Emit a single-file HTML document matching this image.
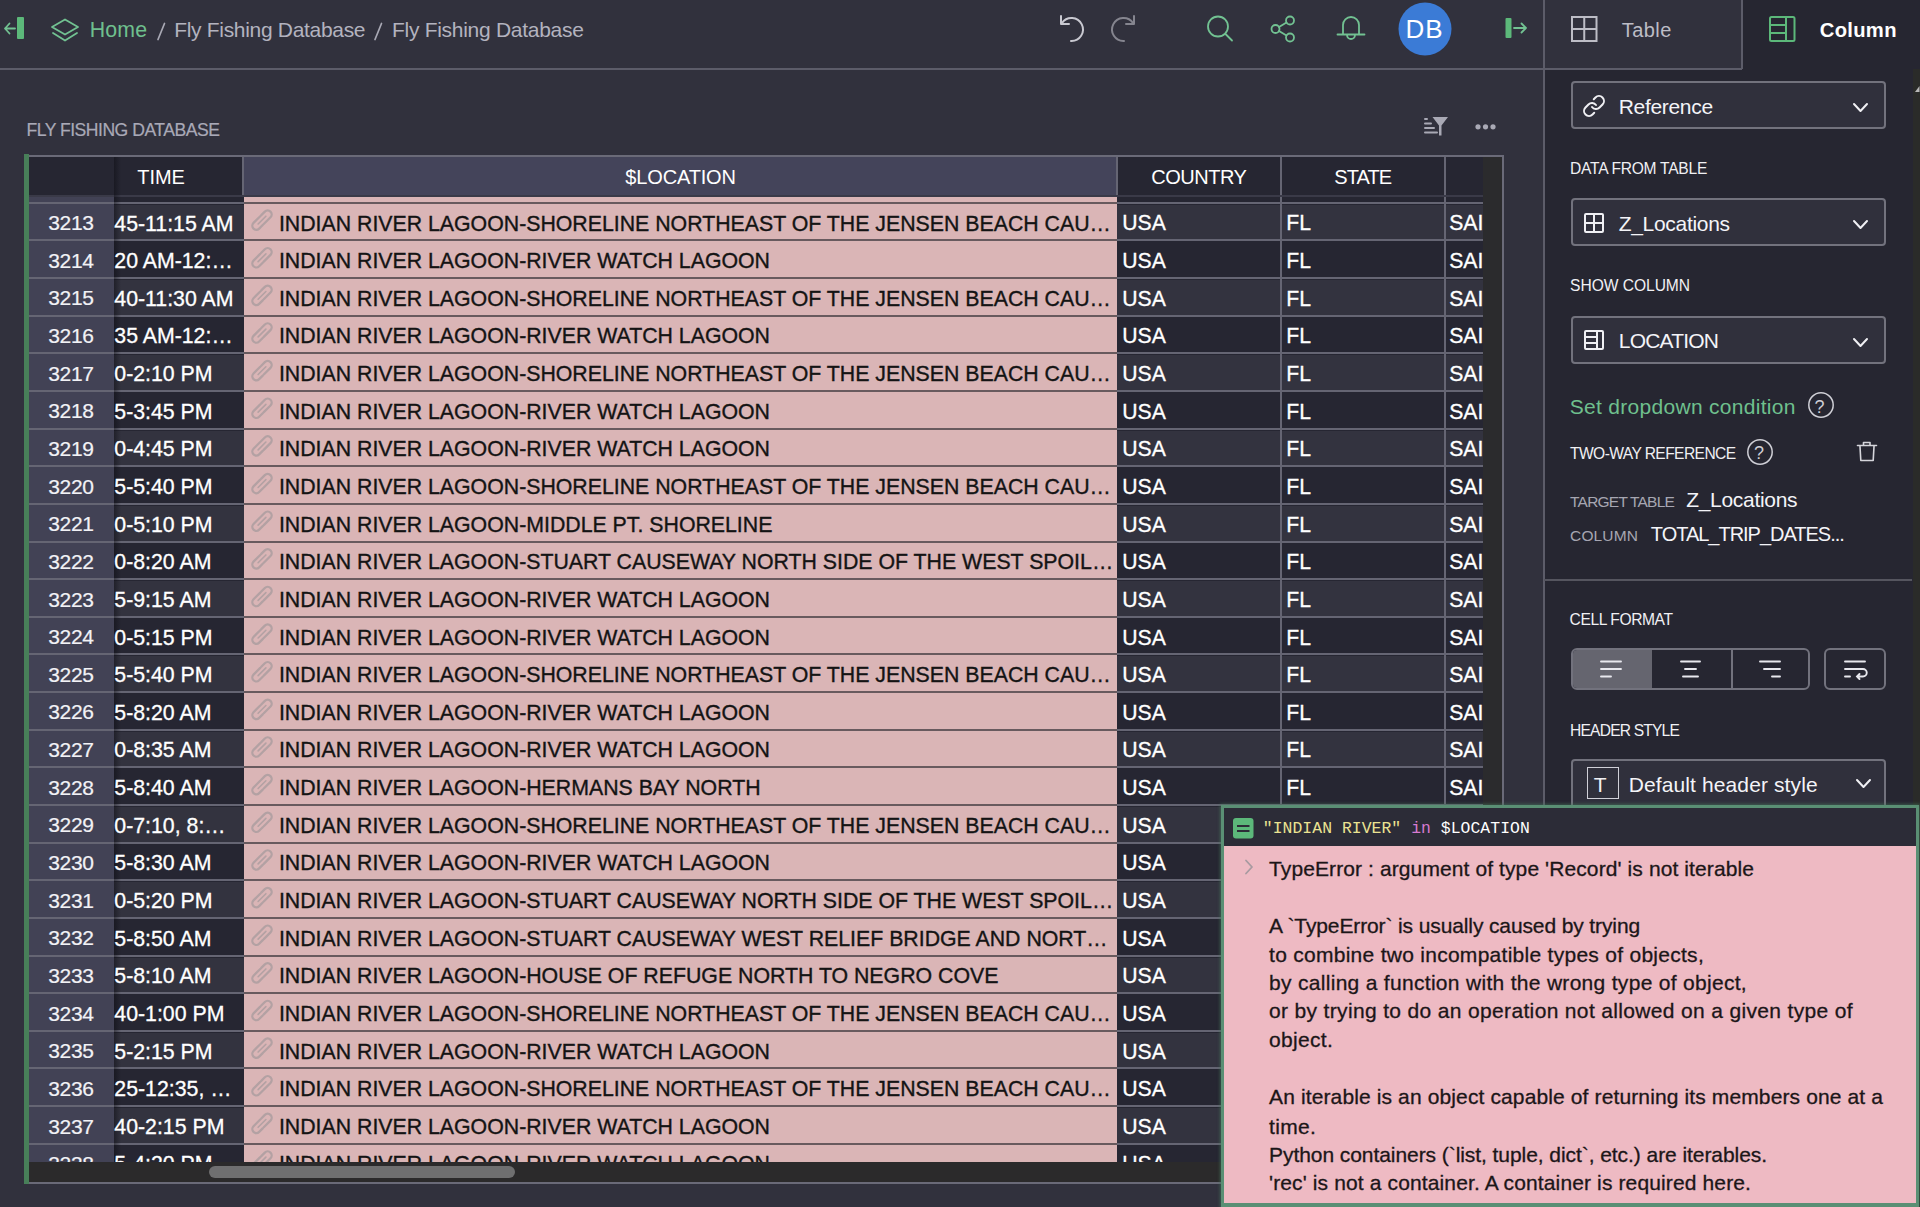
<!DOCTYPE html>
<html><head><meta charset="utf-8"><title>Fly Fishing Database</title>
<style>
html,body{margin:0;padding:0;}
body{width:1920px;height:1207px;overflow:hidden;position:relative;background:#31313d;font-family:'Liberation Sans', sans-serif;}
.t{position:absolute;white-space:pre;}
</style></head><body>
<div style="position:absolute;left:0px;top:0px;width:1920px;height:1207px;background:#31313d;"></div>
<div style="position:absolute;left:0px;top:68px;width:1544px;height:2px;background:#5c5c69;"></div>
<div style="position:absolute;left:1544px;top:68px;width:376px;height:1139px;background:#262631;"></div>
<div style="position:absolute;left:1742.5px;top:0px;width:177.5px;height:68px;background:#262631;"></div>
<div style="position:absolute;left:1543px;top:0px;width:1.5px;height:1207px;background:#5c5c69;"></div>
<div style="position:absolute;left:1741px;top:0px;width:1.5px;height:69px;background:#5c5c69;"></div>
<div style="position:absolute;left:1544px;top:68px;width:198px;height:1.5px;background:#5c5c69;"></div>
<svg style="position:absolute;left:0;top:0" width="1544" height="68" viewBox="0 0 1544 68">
<g fill="none" stroke="#72c292" stroke-width="1.8" stroke-linecap="round" stroke-linejoin="round">
 <path d="M5 28.5 H15 M9.5 23.5 L5 28.5 L9.5 33.5"/>
 <path d="M65 19.5 L78 27 L65 34.5 L52 27 Z"/>
 <path d="M53 33 L65 40.5 L77 33"/>
 <circle cx="1218" cy="26.5" r="10"/>
 <path d="M1225.5 34 L1232 40.5"/>
 <circle cx="1275.5" cy="29" r="4"/><circle cx="1290" cy="20.5" r="4"/><circle cx="1290" cy="37.5" r="4"/>
 <path d="M1279 27 L1286.5 22.5 M1279 31 L1286.5 35.5"/>
 <path d="M1343 34 V25 a8 8 0 0 1 16 0 V34 M1337.5 34.5 H1364.5 M1347 35 a4 4 0 0 0 8 0"/>
 <path d="M1514 28 H1526 M1521.5 23.5 L1526 28 L1521.5 32.5"/>
</g>
<rect x="17" y="17" width="7" height="22" rx="1" fill="#5cb87a"/>
<rect x="1505.5" y="18" width="6" height="20" rx="1" fill="#5cb87a"/>
<g fill="none" stroke="#c9c9d1" stroke-width="2" stroke-linecap="round" stroke-linejoin="round">
 <path d="M1062 23 A 11.5 11.5 0 1 1 1071 41"/>
 <path d="M1061 16 V24 H1069"/>
</g>
<g fill="none" stroke="#85858f" stroke-width="2" stroke-linecap="round" stroke-linejoin="round">
 <path d="M1133 23 A 11.5 11.5 0 1 0 1124 41"/>
 <path d="M1134 16 V24 H1126"/>
</g>
<circle cx="1425" cy="29" r="26.5" fill="#3b7bd6"/>
</svg>
<div class="t" style="left:89.72px;top:20.00px;font-family:'Liberation Sans', sans-serif;font-size:21.3px;line-height:21.3px;color:#6fc08e;letter-spacing:0.172px;">Home</div>
<svg style="position:absolute;left:150px;top:18px" width="250" height="26"><g stroke="#a9a9b5" stroke-width="1.7" stroke-linecap="round"><path d="M14.5 5.5 L8 21.5"/><path d="M231.5 5.5 L225 21.5"/></g></svg>
<div class="t" style="left:174.24px;top:19.00px;font-family:'Liberation Sans', sans-serif;font-size:21px;line-height:21px;color:#b3b3bf;letter-spacing:-0.313px;">Fly Fishing Database</div>
<div class="t" style="left:392.04px;top:19.00px;font-family:'Liberation Sans', sans-serif;font-size:21px;line-height:21px;color:#b3b3bf;letter-spacing:-0.288px;">Fly Fishing Database</div>
<div class="t" style="left:1405.44px;top:16.00px;font-family:'Liberation Sans', sans-serif;font-size:26px;line-height:26px;color:#ffffff;letter-spacing:0.938px;">DB</div>
<svg style="position:absolute;left:1544px;top:0" width="376" height="68" viewBox="1544 0 376 68">
<g fill="none" stroke="#bdbdc6" stroke-width="2">
 <rect x="1572" y="17" width="24.5" height="24"/>
 <path d="M1584.25 17 V41 M1572 29 H1596.5"/>
</g>
<g fill="none" stroke="#5cb87a" stroke-width="2">
 <rect x="1770" y="17" width="24.5" height="24" rx="1.5"/>
 <path d="M1786 17 V41 M1770 25 H1786 M1770 33 H1786"/>
</g>
</svg>
<div class="t" style="left:1621.80px;top:20.00px;font-family:'Liberation Sans', sans-serif;font-size:20px;line-height:20px;color:#bdbdc6;letter-spacing:0.438px;">Table</div>
<div class="t" style="left:1819.79px;top:20.00px;font-family:'Liberation Sans', sans-serif;font-size:20.2px;line-height:20.2px;color:#ffffff;font-weight:700;letter-spacing:0.310px;">Column</div>
<div class="t" style="left:26.44px;top:122.00px;font-family:'Liberation Sans', sans-serif;font-size:17.6px;line-height:17.6px;color:#a9a9b7;letter-spacing:-0.502px;-webkit-text-stroke:0.2px #a9a9b7;">FLY FISHING DATABASE</div>
<svg style="position:absolute;left:1420px;top:110px" width="80" height="32" viewBox="1420 110 80 32">
<g stroke="#a9a9b5" stroke-width="2" stroke-linecap="round">
 <path d="M1425 119 H1427 M1425 123.5 H1431 M1425 128 H1434 M1425 132.5 H1437"/>
</g>
<path d="M1432.5 117 H1448 L1441.5 125.5 V135.5 L1439 135.5 V125.5 Z" fill="#a9a9b5"/>
<g fill="#a9a9b5"><circle cx="1478" cy="126.8" r="2.6"/><circle cx="1485.5" cy="126.8" r="2.6"/><circle cx="1493" cy="126.8" r="2.6"/></g>
</svg>
<div style="position:absolute;left:24px;top:155px;width:1479px;height:1029px;background:#262632;"></div>
<div style="position:absolute;left:28px;top:196px;width:1454.5px;height:966px;overflow:hidden">
<div style="position:absolute;left:85.5px;top:0.00px;width:1369.0px;height:6.80px;background:#262632"></div>
<div style="position:absolute;left:85.5px;top:8.80px;width:1369.0px;height:35.64px;background:#33333f"></div>
<div style="position:absolute;left:85.5px;top:46.44px;width:1369.0px;height:35.64px;background:#262632"></div>
<div style="position:absolute;left:85.5px;top:84.08px;width:1369.0px;height:35.64px;background:#33333f"></div>
<div style="position:absolute;left:85.5px;top:121.71px;width:1369.0px;height:35.64px;background:#262632"></div>
<div style="position:absolute;left:85.5px;top:159.35px;width:1369.0px;height:35.64px;background:#33333f"></div>
<div style="position:absolute;left:85.5px;top:196.99px;width:1369.0px;height:35.64px;background:#262632"></div>
<div style="position:absolute;left:85.5px;top:234.63px;width:1369.0px;height:35.64px;background:#33333f"></div>
<div style="position:absolute;left:85.5px;top:272.27px;width:1369.0px;height:35.64px;background:#262632"></div>
<div style="position:absolute;left:85.5px;top:309.90px;width:1369.0px;height:35.64px;background:#33333f"></div>
<div style="position:absolute;left:85.5px;top:347.54px;width:1369.0px;height:35.64px;background:#262632"></div>
<div style="position:absolute;left:85.5px;top:385.18px;width:1369.0px;height:35.64px;background:#33333f"></div>
<div style="position:absolute;left:85.5px;top:422.82px;width:1369.0px;height:35.64px;background:#262632"></div>
<div style="position:absolute;left:85.5px;top:460.46px;width:1369.0px;height:35.64px;background:#33333f"></div>
<div style="position:absolute;left:85.5px;top:498.09px;width:1369.0px;height:35.64px;background:#262632"></div>
<div style="position:absolute;left:85.5px;top:535.73px;width:1369.0px;height:35.64px;background:#33333f"></div>
<div style="position:absolute;left:85.5px;top:573.37px;width:1369.0px;height:35.64px;background:#262632"></div>
<div style="position:absolute;left:85.5px;top:611.01px;width:1369.0px;height:35.64px;background:#33333f"></div>
<div style="position:absolute;left:85.5px;top:648.65px;width:1369.0px;height:35.64px;background:#262632"></div>
<div style="position:absolute;left:85.5px;top:686.28px;width:1369.0px;height:35.64px;background:#33333f"></div>
<div style="position:absolute;left:85.5px;top:723.92px;width:1369.0px;height:35.64px;background:#262632"></div>
<div style="position:absolute;left:85.5px;top:761.56px;width:1369.0px;height:35.64px;background:#33333f"></div>
<div style="position:absolute;left:85.5px;top:799.20px;width:1369.0px;height:35.64px;background:#262632"></div>
<div style="position:absolute;left:85.5px;top:836.84px;width:1369.0px;height:35.64px;background:#33333f"></div>
<div style="position:absolute;left:85.5px;top:874.47px;width:1369.0px;height:35.64px;background:#262632"></div>
<div style="position:absolute;left:85.5px;top:912.11px;width:1369.0px;height:35.64px;background:#33333f"></div>
<div style="position:absolute;left:85.5px;top:949.75px;width:1369.0px;height:35.64px;background:#262632"></div>
<div style="position:absolute;left:215.5px;top:0;width:873.0px;height:966px;background:#dab5b6"></div>
<div style="position:absolute;left:0;top:0;width:85.5px;height:966px;background:#424255"></div>
<div style="position:absolute;left:0;top:5.80px;width:1454.5px;height:2px;background:#656573"></div>
<div style="position:absolute;left:215.5px;top:5.80px;width:873.0px;height:2px;background:#685a5e"></div>
<div style="position:absolute;left:0;top:43.44px;width:1454.5px;height:2px;background:#656573"></div>
<div style="position:absolute;left:215.5px;top:43.44px;width:873.0px;height:2px;background:#685a5e"></div>
<div style="position:absolute;left:0;top:81.08px;width:1454.5px;height:2px;background:#656573"></div>
<div style="position:absolute;left:215.5px;top:81.08px;width:873.0px;height:2px;background:#685a5e"></div>
<div style="position:absolute;left:0;top:118.71px;width:1454.5px;height:2px;background:#656573"></div>
<div style="position:absolute;left:215.5px;top:118.71px;width:873.0px;height:2px;background:#685a5e"></div>
<div style="position:absolute;left:0;top:156.35px;width:1454.5px;height:2px;background:#656573"></div>
<div style="position:absolute;left:215.5px;top:156.35px;width:873.0px;height:2px;background:#685a5e"></div>
<div style="position:absolute;left:0;top:193.99px;width:1454.5px;height:2px;background:#656573"></div>
<div style="position:absolute;left:215.5px;top:193.99px;width:873.0px;height:2px;background:#685a5e"></div>
<div style="position:absolute;left:0;top:231.63px;width:1454.5px;height:2px;background:#656573"></div>
<div style="position:absolute;left:215.5px;top:231.63px;width:873.0px;height:2px;background:#685a5e"></div>
<div style="position:absolute;left:0;top:269.27px;width:1454.5px;height:2px;background:#656573"></div>
<div style="position:absolute;left:215.5px;top:269.27px;width:873.0px;height:2px;background:#685a5e"></div>
<div style="position:absolute;left:0;top:306.90px;width:1454.5px;height:2px;background:#656573"></div>
<div style="position:absolute;left:215.5px;top:306.90px;width:873.0px;height:2px;background:#685a5e"></div>
<div style="position:absolute;left:0;top:344.54px;width:1454.5px;height:2px;background:#656573"></div>
<div style="position:absolute;left:215.5px;top:344.54px;width:873.0px;height:2px;background:#685a5e"></div>
<div style="position:absolute;left:0;top:382.18px;width:1454.5px;height:2px;background:#656573"></div>
<div style="position:absolute;left:215.5px;top:382.18px;width:873.0px;height:2px;background:#685a5e"></div>
<div style="position:absolute;left:0;top:419.82px;width:1454.5px;height:2px;background:#656573"></div>
<div style="position:absolute;left:215.5px;top:419.82px;width:873.0px;height:2px;background:#685a5e"></div>
<div style="position:absolute;left:0;top:457.46px;width:1454.5px;height:2px;background:#656573"></div>
<div style="position:absolute;left:215.5px;top:457.46px;width:873.0px;height:2px;background:#685a5e"></div>
<div style="position:absolute;left:0;top:495.09px;width:1454.5px;height:2px;background:#656573"></div>
<div style="position:absolute;left:215.5px;top:495.09px;width:873.0px;height:2px;background:#685a5e"></div>
<div style="position:absolute;left:0;top:532.73px;width:1454.5px;height:2px;background:#656573"></div>
<div style="position:absolute;left:215.5px;top:532.73px;width:873.0px;height:2px;background:#685a5e"></div>
<div style="position:absolute;left:0;top:570.37px;width:1454.5px;height:2px;background:#656573"></div>
<div style="position:absolute;left:215.5px;top:570.37px;width:873.0px;height:2px;background:#685a5e"></div>
<div style="position:absolute;left:0;top:608.01px;width:1454.5px;height:2px;background:#656573"></div>
<div style="position:absolute;left:215.5px;top:608.01px;width:873.0px;height:2px;background:#685a5e"></div>
<div style="position:absolute;left:0;top:645.65px;width:1454.5px;height:2px;background:#656573"></div>
<div style="position:absolute;left:215.5px;top:645.65px;width:873.0px;height:2px;background:#685a5e"></div>
<div style="position:absolute;left:0;top:683.28px;width:1454.5px;height:2px;background:#656573"></div>
<div style="position:absolute;left:215.5px;top:683.28px;width:873.0px;height:2px;background:#685a5e"></div>
<div style="position:absolute;left:0;top:720.92px;width:1454.5px;height:2px;background:#656573"></div>
<div style="position:absolute;left:215.5px;top:720.92px;width:873.0px;height:2px;background:#685a5e"></div>
<div style="position:absolute;left:0;top:758.56px;width:1454.5px;height:2px;background:#656573"></div>
<div style="position:absolute;left:215.5px;top:758.56px;width:873.0px;height:2px;background:#685a5e"></div>
<div style="position:absolute;left:0;top:796.20px;width:1454.5px;height:2px;background:#656573"></div>
<div style="position:absolute;left:215.5px;top:796.20px;width:873.0px;height:2px;background:#685a5e"></div>
<div style="position:absolute;left:0;top:833.84px;width:1454.5px;height:2px;background:#656573"></div>
<div style="position:absolute;left:215.5px;top:833.84px;width:873.0px;height:2px;background:#685a5e"></div>
<div style="position:absolute;left:0;top:871.47px;width:1454.5px;height:2px;background:#656573"></div>
<div style="position:absolute;left:215.5px;top:871.47px;width:873.0px;height:2px;background:#685a5e"></div>
<div style="position:absolute;left:0;top:909.11px;width:1454.5px;height:2px;background:#656573"></div>
<div style="position:absolute;left:215.5px;top:909.11px;width:873.0px;height:2px;background:#685a5e"></div>
<div style="position:absolute;left:0;top:946.75px;width:1454.5px;height:2px;background:#656573"></div>
<div style="position:absolute;left:215.5px;top:946.75px;width:873.0px;height:2px;background:#685a5e"></div>
<div style="position:absolute;left:1252.00px;top:0;width:2px;height:966px;background:#656573"></div>
<div style="position:absolute;left:1416.00px;top:0;width:2px;height:966px;background:#656573"></div>
</div>
<div style="position:absolute;left:28px;top:157px;width:1454.5px;height:39px;background:#262632;"></div>
<div style="position:absolute;left:243.5px;top:157px;width:873.0px;height:39px;background:#44445a;"></div>
<div style="position:absolute;left:1482.5px;top:157px;width:19.5px;height:1005px;background:#2b2b2d;"></div>
<div style="position:absolute;left:242.0px;top:157px;width:2.0px;height:39px;background:#656573;"></div>
<div style="position:absolute;left:1116.0px;top:157px;width:2.0px;height:39px;background:#656573;"></div>
<div style="position:absolute;left:1280.0px;top:157px;width:2.0px;height:39px;background:#656573;"></div>
<div style="position:absolute;left:1444.0px;top:157px;width:2.0px;height:39px;background:#656573;"></div>
<div style="position:absolute;left:28px;top:195px;width:1454.5px;height:2px;background:#3a3a48;"></div>
<div style="position:absolute;left:24px;top:155px;width:1479px;height:2px;background:#6a6a78;"></div>
<div style="position:absolute;left:1502px;top:155px;width:2px;height:1029px;background:#6a6a78;"></div>
<div style="position:absolute;left:28px;top:1162px;width:1474px;height:20px;background:#2b2a2b;"></div>
<div style="position:absolute;left:24px;top:1182px;width:1479px;height:2px;background:#6a6a78;"></div>
<div style="position:absolute;left:209px;top:1165.5px;width:306px;height:12.5px;background:#6f6f70;border-radius:6px"></div>
<div style="position:absolute;left:113.5px;top:157px;width:7.0px;height:1005px;background:transparent;background:linear-gradient(to right, rgba(10,10,16,0.45), rgba(10,10,16,0))"></div>
<div style="position:absolute;left:24px;top:154px;width:5px;height:1029.5px;background:#487f59;"></div>
<div class="t" style="left:137.30px;top:167.00px;font-family:'Liberation Sans', sans-serif;font-size:20px;line-height:20px;color:#ffffff;letter-spacing:-0.070px;">TIME</div>
<div class="t" style="left:625.30px;top:167.00px;font-family:'Liberation Sans', sans-serif;font-size:20px;line-height:20px;color:#ffffff;letter-spacing:-0.153px;">$LOCATION</div>
<div class="t" style="left:1151.30px;top:167.00px;font-family:'Liberation Sans', sans-serif;font-size:20px;line-height:20px;color:#ffffff;letter-spacing:-0.504px;">COUNTRY</div>
<div class="t" style="left:1334.30px;top:167.00px;font-family:'Liberation Sans', sans-serif;font-size:20px;line-height:20px;color:#ffffff;letter-spacing:-0.897px;">STATE</div>
<div style="position:absolute;left:28px;top:196px;width:1454.5px;height:966px;overflow:hidden"><div class="t" style="left:20.24px;top:16.00px;font-family:'Liberation Sans', sans-serif;font-size:21px;line-height:21px;color:#f2f2f6;letter-spacing:-0.305px;-webkit-text-stroke:0.2px #f2f2f6;">3213</div></div>
<div style="position:absolute;left:113.5px;top:196px;width:129.0px;height:966px;overflow:hidden"><div class="t" style="left:0.82px;top:18.00px;font-family:'Liberation Sans', sans-serif;font-size:21.3px;line-height:21.3px;color:#ffffff;-webkit-text-stroke:0.3px #fff;">45-11:15 AM</div></div>
<div style="position:absolute;left:243.5px;top:196px;width:873.0px;height:966px;overflow:hidden"><div class="t" style="left:35.42px;top:18.00px;font-family:'Liberation Sans', sans-serif;font-size:21.3px;line-height:21.3px;color:#141414;-webkit-text-stroke:0.35px #141414;">INDIAN RIVER LAGOON-SHORELINE NORTHEAST OF THE JENSEN BEACH CAU…</div></div>
<div style="position:absolute;left:28px;top:196px;width:1454.5px;height:966px;overflow:hidden"><div class="t" style="left:1094.23px;top:16.00px;font-family:'Liberation Sans', sans-serif;font-size:21.2px;line-height:21.2px;color:#ffffff;-webkit-text-stroke:0.3px #fff;">USA</div></div>
<div style="position:absolute;left:28px;top:196px;width:1454.5px;height:966px;overflow:hidden"><div class="t" style="left:1258.23px;top:16.00px;font-family:'Liberation Sans', sans-serif;font-size:21.2px;line-height:21.2px;color:#ffffff;-webkit-text-stroke:0.3px #fff;">FL</div></div>
<div style="position:absolute;left:1446px;top:196px;width:36.5px;height:966px;overflow:hidden"><div class="t" style="left:3.23px;top:16.00px;font-family:'Liberation Sans', sans-serif;font-size:21.2px;line-height:21.2px;color:#ffffff;-webkit-text-stroke:0.3px #fff;">SAI</div></div>
<div style="position:absolute;left:28px;top:196px;width:1454.5px;height:966px;overflow:hidden"><div class="t" style="left:20.24px;top:54.00px;font-family:'Liberation Sans', sans-serif;font-size:21px;line-height:21px;color:#f2f2f6;letter-spacing:-0.305px;-webkit-text-stroke:0.2px #f2f2f6;">3214</div></div>
<div style="position:absolute;left:113.5px;top:196px;width:129.0px;height:966px;overflow:hidden"><div class="t" style="left:0.82px;top:55.00px;font-family:'Liberation Sans', sans-serif;font-size:21.3px;line-height:21.3px;color:#ffffff;-webkit-text-stroke:0.3px #fff;">20 AM-12:…</div></div>
<div style="position:absolute;left:243.5px;top:196px;width:873.0px;height:966px;overflow:hidden"><div class="t" style="left:35.42px;top:55.00px;font-family:'Liberation Sans', sans-serif;font-size:21.3px;line-height:21.3px;color:#141414;-webkit-text-stroke:0.35px #141414;">INDIAN RIVER LAGOON-RIVER WATCH LAGOON</div></div>
<div style="position:absolute;left:28px;top:196px;width:1454.5px;height:966px;overflow:hidden"><div class="t" style="left:1094.23px;top:54.00px;font-family:'Liberation Sans', sans-serif;font-size:21.2px;line-height:21.2px;color:#ffffff;-webkit-text-stroke:0.3px #fff;">USA</div></div>
<div style="position:absolute;left:28px;top:196px;width:1454.5px;height:966px;overflow:hidden"><div class="t" style="left:1258.23px;top:54.00px;font-family:'Liberation Sans', sans-serif;font-size:21.2px;line-height:21.2px;color:#ffffff;-webkit-text-stroke:0.3px #fff;">FL</div></div>
<div style="position:absolute;left:1446px;top:196px;width:36.5px;height:966px;overflow:hidden"><div class="t" style="left:3.23px;top:54.00px;font-family:'Liberation Sans', sans-serif;font-size:21.2px;line-height:21.2px;color:#ffffff;-webkit-text-stroke:0.3px #fff;">SAI</div></div>
<div style="position:absolute;left:28px;top:196px;width:1454.5px;height:966px;overflow:hidden"><div class="t" style="left:20.24px;top:91.00px;font-family:'Liberation Sans', sans-serif;font-size:21px;line-height:21px;color:#f2f2f6;letter-spacing:-0.305px;-webkit-text-stroke:0.2px #f2f2f6;">3215</div></div>
<div style="position:absolute;left:113.5px;top:196px;width:129.0px;height:966px;overflow:hidden"><div class="t" style="left:0.82px;top:93.00px;font-family:'Liberation Sans', sans-serif;font-size:21.3px;line-height:21.3px;color:#ffffff;-webkit-text-stroke:0.3px #fff;">40-11:30 AM</div></div>
<div style="position:absolute;left:243.5px;top:196px;width:873.0px;height:966px;overflow:hidden"><div class="t" style="left:35.42px;top:93.00px;font-family:'Liberation Sans', sans-serif;font-size:21.3px;line-height:21.3px;color:#141414;-webkit-text-stroke:0.35px #141414;">INDIAN RIVER LAGOON-SHORELINE NORTHEAST OF THE JENSEN BEACH CAU…</div></div>
<div style="position:absolute;left:28px;top:196px;width:1454.5px;height:966px;overflow:hidden"><div class="t" style="left:1094.23px;top:92.00px;font-family:'Liberation Sans', sans-serif;font-size:21.2px;line-height:21.2px;color:#ffffff;-webkit-text-stroke:0.3px #fff;">USA</div></div>
<div style="position:absolute;left:28px;top:196px;width:1454.5px;height:966px;overflow:hidden"><div class="t" style="left:1258.23px;top:92.00px;font-family:'Liberation Sans', sans-serif;font-size:21.2px;line-height:21.2px;color:#ffffff;-webkit-text-stroke:0.3px #fff;">FL</div></div>
<div style="position:absolute;left:1446px;top:196px;width:36.5px;height:966px;overflow:hidden"><div class="t" style="left:3.23px;top:92.00px;font-family:'Liberation Sans', sans-serif;font-size:21.2px;line-height:21.2px;color:#ffffff;-webkit-text-stroke:0.3px #fff;">SAI</div></div>
<div style="position:absolute;left:28px;top:196px;width:1454.5px;height:966px;overflow:hidden"><div class="t" style="left:20.24px;top:129.00px;font-family:'Liberation Sans', sans-serif;font-size:21px;line-height:21px;color:#f2f2f6;letter-spacing:-0.305px;-webkit-text-stroke:0.2px #f2f2f6;">3216</div></div>
<div style="position:absolute;left:113.5px;top:196px;width:129.0px;height:966px;overflow:hidden"><div class="t" style="left:0.82px;top:130.00px;font-family:'Liberation Sans', sans-serif;font-size:21.3px;line-height:21.3px;color:#ffffff;-webkit-text-stroke:0.3px #fff;">35 AM-12:…</div></div>
<div style="position:absolute;left:243.5px;top:196px;width:873.0px;height:966px;overflow:hidden"><div class="t" style="left:35.42px;top:130.00px;font-family:'Liberation Sans', sans-serif;font-size:21.3px;line-height:21.3px;color:#141414;-webkit-text-stroke:0.35px #141414;">INDIAN RIVER LAGOON-RIVER WATCH LAGOON</div></div>
<div style="position:absolute;left:28px;top:196px;width:1454.5px;height:966px;overflow:hidden"><div class="t" style="left:1094.23px;top:129.00px;font-family:'Liberation Sans', sans-serif;font-size:21.2px;line-height:21.2px;color:#ffffff;-webkit-text-stroke:0.3px #fff;">USA</div></div>
<div style="position:absolute;left:28px;top:196px;width:1454.5px;height:966px;overflow:hidden"><div class="t" style="left:1258.23px;top:129.00px;font-family:'Liberation Sans', sans-serif;font-size:21.2px;line-height:21.2px;color:#ffffff;-webkit-text-stroke:0.3px #fff;">FL</div></div>
<div style="position:absolute;left:1446px;top:196px;width:36.5px;height:966px;overflow:hidden"><div class="t" style="left:3.23px;top:129.00px;font-family:'Liberation Sans', sans-serif;font-size:21.2px;line-height:21.2px;color:#ffffff;-webkit-text-stroke:0.3px #fff;">SAI</div></div>
<div style="position:absolute;left:28px;top:196px;width:1454.5px;height:966px;overflow:hidden"><div class="t" style="left:20.24px;top:167.00px;font-family:'Liberation Sans', sans-serif;font-size:21px;line-height:21px;color:#f2f2f6;letter-spacing:-0.305px;-webkit-text-stroke:0.2px #f2f2f6;">3217</div></div>
<div style="position:absolute;left:113.5px;top:196px;width:129.0px;height:966px;overflow:hidden"><div class="t" style="left:0.82px;top:168.00px;font-family:'Liberation Sans', sans-serif;font-size:21.3px;line-height:21.3px;color:#ffffff;-webkit-text-stroke:0.3px #fff;">0-2:10 PM</div></div>
<div style="position:absolute;left:243.5px;top:196px;width:873.0px;height:966px;overflow:hidden"><div class="t" style="left:35.42px;top:168.00px;font-family:'Liberation Sans', sans-serif;font-size:21.3px;line-height:21.3px;color:#141414;-webkit-text-stroke:0.35px #141414;">INDIAN RIVER LAGOON-SHORELINE NORTHEAST OF THE JENSEN BEACH CAU…</div></div>
<div style="position:absolute;left:28px;top:196px;width:1454.5px;height:966px;overflow:hidden"><div class="t" style="left:1094.23px;top:167.00px;font-family:'Liberation Sans', sans-serif;font-size:21.2px;line-height:21.2px;color:#ffffff;-webkit-text-stroke:0.3px #fff;">USA</div></div>
<div style="position:absolute;left:28px;top:196px;width:1454.5px;height:966px;overflow:hidden"><div class="t" style="left:1258.23px;top:167.00px;font-family:'Liberation Sans', sans-serif;font-size:21.2px;line-height:21.2px;color:#ffffff;-webkit-text-stroke:0.3px #fff;">FL</div></div>
<div style="position:absolute;left:1446px;top:196px;width:36.5px;height:966px;overflow:hidden"><div class="t" style="left:3.23px;top:167.00px;font-family:'Liberation Sans', sans-serif;font-size:21.2px;line-height:21.2px;color:#ffffff;-webkit-text-stroke:0.3px #fff;">SAI</div></div>
<div style="position:absolute;left:28px;top:196px;width:1454.5px;height:966px;overflow:hidden"><div class="t" style="left:20.24px;top:204.00px;font-family:'Liberation Sans', sans-serif;font-size:21px;line-height:21px;color:#f2f2f6;letter-spacing:-0.305px;-webkit-text-stroke:0.2px #f2f2f6;">3218</div></div>
<div style="position:absolute;left:113.5px;top:196px;width:129.0px;height:966px;overflow:hidden"><div class="t" style="left:0.82px;top:206.00px;font-family:'Liberation Sans', sans-serif;font-size:21.3px;line-height:21.3px;color:#ffffff;-webkit-text-stroke:0.3px #fff;">5-3:45 PM</div></div>
<div style="position:absolute;left:243.5px;top:196px;width:873.0px;height:966px;overflow:hidden"><div class="t" style="left:35.42px;top:206.00px;font-family:'Liberation Sans', sans-serif;font-size:21.3px;line-height:21.3px;color:#141414;-webkit-text-stroke:0.35px #141414;">INDIAN RIVER LAGOON-RIVER WATCH LAGOON</div></div>
<div style="position:absolute;left:28px;top:196px;width:1454.5px;height:966px;overflow:hidden"><div class="t" style="left:1094.23px;top:205.00px;font-family:'Liberation Sans', sans-serif;font-size:21.2px;line-height:21.2px;color:#ffffff;-webkit-text-stroke:0.3px #fff;">USA</div></div>
<div style="position:absolute;left:28px;top:196px;width:1454.5px;height:966px;overflow:hidden"><div class="t" style="left:1258.23px;top:205.00px;font-family:'Liberation Sans', sans-serif;font-size:21.2px;line-height:21.2px;color:#ffffff;-webkit-text-stroke:0.3px #fff;">FL</div></div>
<div style="position:absolute;left:1446px;top:196px;width:36.5px;height:966px;overflow:hidden"><div class="t" style="left:3.23px;top:205.00px;font-family:'Liberation Sans', sans-serif;font-size:21.2px;line-height:21.2px;color:#ffffff;-webkit-text-stroke:0.3px #fff;">SAI</div></div>
<div style="position:absolute;left:28px;top:196px;width:1454.5px;height:966px;overflow:hidden"><div class="t" style="left:20.24px;top:242.00px;font-family:'Liberation Sans', sans-serif;font-size:21px;line-height:21px;color:#f2f2f6;letter-spacing:-0.305px;-webkit-text-stroke:0.2px #f2f2f6;">3219</div></div>
<div style="position:absolute;left:113.5px;top:196px;width:129.0px;height:966px;overflow:hidden"><div class="t" style="left:0.82px;top:243.00px;font-family:'Liberation Sans', sans-serif;font-size:21.3px;line-height:21.3px;color:#ffffff;-webkit-text-stroke:0.3px #fff;">0-4:45 PM</div></div>
<div style="position:absolute;left:243.5px;top:196px;width:873.0px;height:966px;overflow:hidden"><div class="t" style="left:35.42px;top:243.00px;font-family:'Liberation Sans', sans-serif;font-size:21.3px;line-height:21.3px;color:#141414;-webkit-text-stroke:0.35px #141414;">INDIAN RIVER LAGOON-RIVER WATCH LAGOON</div></div>
<div style="position:absolute;left:28px;top:196px;width:1454.5px;height:966px;overflow:hidden"><div class="t" style="left:1094.23px;top:242.00px;font-family:'Liberation Sans', sans-serif;font-size:21.2px;line-height:21.2px;color:#ffffff;-webkit-text-stroke:0.3px #fff;">USA</div></div>
<div style="position:absolute;left:28px;top:196px;width:1454.5px;height:966px;overflow:hidden"><div class="t" style="left:1258.23px;top:242.00px;font-family:'Liberation Sans', sans-serif;font-size:21.2px;line-height:21.2px;color:#ffffff;-webkit-text-stroke:0.3px #fff;">FL</div></div>
<div style="position:absolute;left:1446px;top:196px;width:36.5px;height:966px;overflow:hidden"><div class="t" style="left:3.23px;top:242.00px;font-family:'Liberation Sans', sans-serif;font-size:21.2px;line-height:21.2px;color:#ffffff;-webkit-text-stroke:0.3px #fff;">SAI</div></div>
<div style="position:absolute;left:28px;top:196px;width:1454.5px;height:966px;overflow:hidden"><div class="t" style="left:20.24px;top:280.00px;font-family:'Liberation Sans', sans-serif;font-size:21px;line-height:21px;color:#f2f2f6;letter-spacing:-0.305px;-webkit-text-stroke:0.2px #f2f2f6;">3220</div></div>
<div style="position:absolute;left:113.5px;top:196px;width:129.0px;height:966px;overflow:hidden"><div class="t" style="left:0.82px;top:281.00px;font-family:'Liberation Sans', sans-serif;font-size:21.3px;line-height:21.3px;color:#ffffff;-webkit-text-stroke:0.3px #fff;">5-5:40 PM</div></div>
<div style="position:absolute;left:243.5px;top:196px;width:873.0px;height:966px;overflow:hidden"><div class="t" style="left:35.42px;top:281.00px;font-family:'Liberation Sans', sans-serif;font-size:21.3px;line-height:21.3px;color:#141414;-webkit-text-stroke:0.35px #141414;">INDIAN RIVER LAGOON-SHORELINE NORTHEAST OF THE JENSEN BEACH CAU…</div></div>
<div style="position:absolute;left:28px;top:196px;width:1454.5px;height:966px;overflow:hidden"><div class="t" style="left:1094.23px;top:280.00px;font-family:'Liberation Sans', sans-serif;font-size:21.2px;line-height:21.2px;color:#ffffff;-webkit-text-stroke:0.3px #fff;">USA</div></div>
<div style="position:absolute;left:28px;top:196px;width:1454.5px;height:966px;overflow:hidden"><div class="t" style="left:1258.23px;top:280.00px;font-family:'Liberation Sans', sans-serif;font-size:21.2px;line-height:21.2px;color:#ffffff;-webkit-text-stroke:0.3px #fff;">FL</div></div>
<div style="position:absolute;left:1446px;top:196px;width:36.5px;height:966px;overflow:hidden"><div class="t" style="left:3.23px;top:280.00px;font-family:'Liberation Sans', sans-serif;font-size:21.2px;line-height:21.2px;color:#ffffff;-webkit-text-stroke:0.3px #fff;">SAI</div></div>
<div style="position:absolute;left:28px;top:196px;width:1454.5px;height:966px;overflow:hidden"><div class="t" style="left:20.24px;top:317.00px;font-family:'Liberation Sans', sans-serif;font-size:21px;line-height:21px;color:#f2f2f6;letter-spacing:-0.305px;-webkit-text-stroke:0.2px #f2f2f6;">3221</div></div>
<div style="position:absolute;left:113.5px;top:196px;width:129.0px;height:966px;overflow:hidden"><div class="t" style="left:0.82px;top:319.00px;font-family:'Liberation Sans', sans-serif;font-size:21.3px;line-height:21.3px;color:#ffffff;-webkit-text-stroke:0.3px #fff;">0-5:10 PM</div></div>
<div style="position:absolute;left:243.5px;top:196px;width:873.0px;height:966px;overflow:hidden"><div class="t" style="left:35.42px;top:319.00px;font-family:'Liberation Sans', sans-serif;font-size:21.3px;line-height:21.3px;color:#141414;-webkit-text-stroke:0.35px #141414;">INDIAN RIVER LAGOON-MIDDLE PT. SHORELINE</div></div>
<div style="position:absolute;left:28px;top:196px;width:1454.5px;height:966px;overflow:hidden"><div class="t" style="left:1094.23px;top:318.00px;font-family:'Liberation Sans', sans-serif;font-size:21.2px;line-height:21.2px;color:#ffffff;-webkit-text-stroke:0.3px #fff;">USA</div></div>
<div style="position:absolute;left:28px;top:196px;width:1454.5px;height:966px;overflow:hidden"><div class="t" style="left:1258.23px;top:318.00px;font-family:'Liberation Sans', sans-serif;font-size:21.2px;line-height:21.2px;color:#ffffff;-webkit-text-stroke:0.3px #fff;">FL</div></div>
<div style="position:absolute;left:1446px;top:196px;width:36.5px;height:966px;overflow:hidden"><div class="t" style="left:3.23px;top:318.00px;font-family:'Liberation Sans', sans-serif;font-size:21.2px;line-height:21.2px;color:#ffffff;-webkit-text-stroke:0.3px #fff;">SAI</div></div>
<div style="position:absolute;left:28px;top:196px;width:1454.5px;height:966px;overflow:hidden"><div class="t" style="left:20.24px;top:355.00px;font-family:'Liberation Sans', sans-serif;font-size:21px;line-height:21px;color:#f2f2f6;letter-spacing:-0.305px;-webkit-text-stroke:0.2px #f2f2f6;">3222</div></div>
<div style="position:absolute;left:113.5px;top:196px;width:129.0px;height:966px;overflow:hidden"><div class="t" style="left:0.82px;top:356.00px;font-family:'Liberation Sans', sans-serif;font-size:21.3px;line-height:21.3px;color:#ffffff;-webkit-text-stroke:0.3px #fff;">0-8:20 AM</div></div>
<div style="position:absolute;left:243.5px;top:196px;width:873.0px;height:966px;overflow:hidden"><div class="t" style="left:35.42px;top:356.00px;font-family:'Liberation Sans', sans-serif;font-size:21.3px;line-height:21.3px;color:#141414;-webkit-text-stroke:0.35px #141414;">INDIAN RIVER LAGOON-STUART CAUSEWAY NORTH SIDE OF THE WEST SPOIL…</div></div>
<div style="position:absolute;left:28px;top:196px;width:1454.5px;height:966px;overflow:hidden"><div class="t" style="left:1094.23px;top:355.00px;font-family:'Liberation Sans', sans-serif;font-size:21.2px;line-height:21.2px;color:#ffffff;-webkit-text-stroke:0.3px #fff;">USA</div></div>
<div style="position:absolute;left:28px;top:196px;width:1454.5px;height:966px;overflow:hidden"><div class="t" style="left:1258.23px;top:355.00px;font-family:'Liberation Sans', sans-serif;font-size:21.2px;line-height:21.2px;color:#ffffff;-webkit-text-stroke:0.3px #fff;">FL</div></div>
<div style="position:absolute;left:1446px;top:196px;width:36.5px;height:966px;overflow:hidden"><div class="t" style="left:3.23px;top:355.00px;font-family:'Liberation Sans', sans-serif;font-size:21.2px;line-height:21.2px;color:#ffffff;-webkit-text-stroke:0.3px #fff;">SAI</div></div>
<div style="position:absolute;left:28px;top:196px;width:1454.5px;height:966px;overflow:hidden"><div class="t" style="left:20.24px;top:393.00px;font-family:'Liberation Sans', sans-serif;font-size:21px;line-height:21px;color:#f2f2f6;letter-spacing:-0.305px;-webkit-text-stroke:0.2px #f2f2f6;">3223</div></div>
<div style="position:absolute;left:113.5px;top:196px;width:129.0px;height:966px;overflow:hidden"><div class="t" style="left:0.82px;top:394.00px;font-family:'Liberation Sans', sans-serif;font-size:21.3px;line-height:21.3px;color:#ffffff;-webkit-text-stroke:0.3px #fff;">5-9:15 AM</div></div>
<div style="position:absolute;left:243.5px;top:196px;width:873.0px;height:966px;overflow:hidden"><div class="t" style="left:35.42px;top:394.00px;font-family:'Liberation Sans', sans-serif;font-size:21.3px;line-height:21.3px;color:#141414;-webkit-text-stroke:0.35px #141414;">INDIAN RIVER LAGOON-RIVER WATCH LAGOON</div></div>
<div style="position:absolute;left:28px;top:196px;width:1454.5px;height:966px;overflow:hidden"><div class="t" style="left:1094.23px;top:393.00px;font-family:'Liberation Sans', sans-serif;font-size:21.2px;line-height:21.2px;color:#ffffff;-webkit-text-stroke:0.3px #fff;">USA</div></div>
<div style="position:absolute;left:28px;top:196px;width:1454.5px;height:966px;overflow:hidden"><div class="t" style="left:1258.23px;top:393.00px;font-family:'Liberation Sans', sans-serif;font-size:21.2px;line-height:21.2px;color:#ffffff;-webkit-text-stroke:0.3px #fff;">FL</div></div>
<div style="position:absolute;left:1446px;top:196px;width:36.5px;height:966px;overflow:hidden"><div class="t" style="left:3.23px;top:393.00px;font-family:'Liberation Sans', sans-serif;font-size:21.2px;line-height:21.2px;color:#ffffff;-webkit-text-stroke:0.3px #fff;">SAI</div></div>
<div style="position:absolute;left:28px;top:196px;width:1454.5px;height:966px;overflow:hidden"><div class="t" style="left:20.24px;top:430.00px;font-family:'Liberation Sans', sans-serif;font-size:21px;line-height:21px;color:#f2f2f6;letter-spacing:-0.305px;-webkit-text-stroke:0.2px #f2f2f6;">3224</div></div>
<div style="position:absolute;left:113.5px;top:196px;width:129.0px;height:966px;overflow:hidden"><div class="t" style="left:0.82px;top:432.00px;font-family:'Liberation Sans', sans-serif;font-size:21.3px;line-height:21.3px;color:#ffffff;-webkit-text-stroke:0.3px #fff;">0-5:15 PM</div></div>
<div style="position:absolute;left:243.5px;top:196px;width:873.0px;height:966px;overflow:hidden"><div class="t" style="left:35.42px;top:432.00px;font-family:'Liberation Sans', sans-serif;font-size:21.3px;line-height:21.3px;color:#141414;-webkit-text-stroke:0.35px #141414;">INDIAN RIVER LAGOON-RIVER WATCH LAGOON</div></div>
<div style="position:absolute;left:28px;top:196px;width:1454.5px;height:966px;overflow:hidden"><div class="t" style="left:1094.23px;top:431.00px;font-family:'Liberation Sans', sans-serif;font-size:21.2px;line-height:21.2px;color:#ffffff;-webkit-text-stroke:0.3px #fff;">USA</div></div>
<div style="position:absolute;left:28px;top:196px;width:1454.5px;height:966px;overflow:hidden"><div class="t" style="left:1258.23px;top:431.00px;font-family:'Liberation Sans', sans-serif;font-size:21.2px;line-height:21.2px;color:#ffffff;-webkit-text-stroke:0.3px #fff;">FL</div></div>
<div style="position:absolute;left:1446px;top:196px;width:36.5px;height:966px;overflow:hidden"><div class="t" style="left:3.23px;top:431.00px;font-family:'Liberation Sans', sans-serif;font-size:21.2px;line-height:21.2px;color:#ffffff;-webkit-text-stroke:0.3px #fff;">SAI</div></div>
<div style="position:absolute;left:28px;top:196px;width:1454.5px;height:966px;overflow:hidden"><div class="t" style="left:20.24px;top:468.00px;font-family:'Liberation Sans', sans-serif;font-size:21px;line-height:21px;color:#f2f2f6;letter-spacing:-0.305px;-webkit-text-stroke:0.2px #f2f2f6;">3225</div></div>
<div style="position:absolute;left:113.5px;top:196px;width:129.0px;height:966px;overflow:hidden"><div class="t" style="left:0.82px;top:469.00px;font-family:'Liberation Sans', sans-serif;font-size:21.3px;line-height:21.3px;color:#ffffff;-webkit-text-stroke:0.3px #fff;">5-5:40 PM</div></div>
<div style="position:absolute;left:243.5px;top:196px;width:873.0px;height:966px;overflow:hidden"><div class="t" style="left:35.42px;top:469.00px;font-family:'Liberation Sans', sans-serif;font-size:21.3px;line-height:21.3px;color:#141414;-webkit-text-stroke:0.35px #141414;">INDIAN RIVER LAGOON-SHORELINE NORTHEAST OF THE JENSEN BEACH CAU…</div></div>
<div style="position:absolute;left:28px;top:196px;width:1454.5px;height:966px;overflow:hidden"><div class="t" style="left:1094.23px;top:468.00px;font-family:'Liberation Sans', sans-serif;font-size:21.2px;line-height:21.2px;color:#ffffff;-webkit-text-stroke:0.3px #fff;">USA</div></div>
<div style="position:absolute;left:28px;top:196px;width:1454.5px;height:966px;overflow:hidden"><div class="t" style="left:1258.23px;top:468.00px;font-family:'Liberation Sans', sans-serif;font-size:21.2px;line-height:21.2px;color:#ffffff;-webkit-text-stroke:0.3px #fff;">FL</div></div>
<div style="position:absolute;left:1446px;top:196px;width:36.5px;height:966px;overflow:hidden"><div class="t" style="left:3.23px;top:468.00px;font-family:'Liberation Sans', sans-serif;font-size:21.2px;line-height:21.2px;color:#ffffff;-webkit-text-stroke:0.3px #fff;">SAI</div></div>
<div style="position:absolute;left:28px;top:196px;width:1454.5px;height:966px;overflow:hidden"><div class="t" style="left:20.24px;top:505.00px;font-family:'Liberation Sans', sans-serif;font-size:21px;line-height:21px;color:#f2f2f6;letter-spacing:-0.305px;-webkit-text-stroke:0.2px #f2f2f6;">3226</div></div>
<div style="position:absolute;left:113.5px;top:196px;width:129.0px;height:966px;overflow:hidden"><div class="t" style="left:0.82px;top:507.00px;font-family:'Liberation Sans', sans-serif;font-size:21.3px;line-height:21.3px;color:#ffffff;-webkit-text-stroke:0.3px #fff;">5-8:20 AM</div></div>
<div style="position:absolute;left:243.5px;top:196px;width:873.0px;height:966px;overflow:hidden"><div class="t" style="left:35.42px;top:507.00px;font-family:'Liberation Sans', sans-serif;font-size:21.3px;line-height:21.3px;color:#141414;-webkit-text-stroke:0.35px #141414;">INDIAN RIVER LAGOON-RIVER WATCH LAGOON</div></div>
<div style="position:absolute;left:28px;top:196px;width:1454.5px;height:966px;overflow:hidden"><div class="t" style="left:1094.23px;top:506.00px;font-family:'Liberation Sans', sans-serif;font-size:21.2px;line-height:21.2px;color:#ffffff;-webkit-text-stroke:0.3px #fff;">USA</div></div>
<div style="position:absolute;left:28px;top:196px;width:1454.5px;height:966px;overflow:hidden"><div class="t" style="left:1258.23px;top:506.00px;font-family:'Liberation Sans', sans-serif;font-size:21.2px;line-height:21.2px;color:#ffffff;-webkit-text-stroke:0.3px #fff;">FL</div></div>
<div style="position:absolute;left:1446px;top:196px;width:36.5px;height:966px;overflow:hidden"><div class="t" style="left:3.23px;top:506.00px;font-family:'Liberation Sans', sans-serif;font-size:21.2px;line-height:21.2px;color:#ffffff;-webkit-text-stroke:0.3px #fff;">SAI</div></div>
<div style="position:absolute;left:28px;top:196px;width:1454.5px;height:966px;overflow:hidden"><div class="t" style="left:20.24px;top:543.00px;font-family:'Liberation Sans', sans-serif;font-size:21px;line-height:21px;color:#f2f2f6;letter-spacing:-0.305px;-webkit-text-stroke:0.2px #f2f2f6;">3227</div></div>
<div style="position:absolute;left:113.5px;top:196px;width:129.0px;height:966px;overflow:hidden"><div class="t" style="left:0.82px;top:544.00px;font-family:'Liberation Sans', sans-serif;font-size:21.3px;line-height:21.3px;color:#ffffff;-webkit-text-stroke:0.3px #fff;">0-8:35 AM</div></div>
<div style="position:absolute;left:243.5px;top:196px;width:873.0px;height:966px;overflow:hidden"><div class="t" style="left:35.42px;top:544.00px;font-family:'Liberation Sans', sans-serif;font-size:21.3px;line-height:21.3px;color:#141414;-webkit-text-stroke:0.35px #141414;">INDIAN RIVER LAGOON-RIVER WATCH LAGOON</div></div>
<div style="position:absolute;left:28px;top:196px;width:1454.5px;height:966px;overflow:hidden"><div class="t" style="left:1094.23px;top:543.00px;font-family:'Liberation Sans', sans-serif;font-size:21.2px;line-height:21.2px;color:#ffffff;-webkit-text-stroke:0.3px #fff;">USA</div></div>
<div style="position:absolute;left:28px;top:196px;width:1454.5px;height:966px;overflow:hidden"><div class="t" style="left:1258.23px;top:543.00px;font-family:'Liberation Sans', sans-serif;font-size:21.2px;line-height:21.2px;color:#ffffff;-webkit-text-stroke:0.3px #fff;">FL</div></div>
<div style="position:absolute;left:1446px;top:196px;width:36.5px;height:966px;overflow:hidden"><div class="t" style="left:3.23px;top:543.00px;font-family:'Liberation Sans', sans-serif;font-size:21.2px;line-height:21.2px;color:#ffffff;-webkit-text-stroke:0.3px #fff;">SAI</div></div>
<div style="position:absolute;left:28px;top:196px;width:1454.5px;height:966px;overflow:hidden"><div class="t" style="left:20.24px;top:581.00px;font-family:'Liberation Sans', sans-serif;font-size:21px;line-height:21px;color:#f2f2f6;letter-spacing:-0.305px;-webkit-text-stroke:0.2px #f2f2f6;">3228</div></div>
<div style="position:absolute;left:113.5px;top:196px;width:129.0px;height:966px;overflow:hidden"><div class="t" style="left:0.82px;top:582.00px;font-family:'Liberation Sans', sans-serif;font-size:21.3px;line-height:21.3px;color:#ffffff;-webkit-text-stroke:0.3px #fff;">5-8:40 AM</div></div>
<div style="position:absolute;left:243.5px;top:196px;width:873.0px;height:966px;overflow:hidden"><div class="t" style="left:35.42px;top:582.00px;font-family:'Liberation Sans', sans-serif;font-size:21.3px;line-height:21.3px;color:#141414;-webkit-text-stroke:0.35px #141414;">INDIAN RIVER LAGOON-HERMANS BAY NORTH</div></div>
<div style="position:absolute;left:28px;top:196px;width:1454.5px;height:966px;overflow:hidden"><div class="t" style="left:1094.23px;top:581.00px;font-family:'Liberation Sans', sans-serif;font-size:21.2px;line-height:21.2px;color:#ffffff;-webkit-text-stroke:0.3px #fff;">USA</div></div>
<div style="position:absolute;left:28px;top:196px;width:1454.5px;height:966px;overflow:hidden"><div class="t" style="left:1258.23px;top:581.00px;font-family:'Liberation Sans', sans-serif;font-size:21.2px;line-height:21.2px;color:#ffffff;-webkit-text-stroke:0.3px #fff;">FL</div></div>
<div style="position:absolute;left:1446px;top:196px;width:36.5px;height:966px;overflow:hidden"><div class="t" style="left:3.23px;top:581.00px;font-family:'Liberation Sans', sans-serif;font-size:21.2px;line-height:21.2px;color:#ffffff;-webkit-text-stroke:0.3px #fff;">SAI</div></div>
<div style="position:absolute;left:28px;top:196px;width:1454.5px;height:966px;overflow:hidden"><div class="t" style="left:20.24px;top:618.00px;font-family:'Liberation Sans', sans-serif;font-size:21px;line-height:21px;color:#f2f2f6;letter-spacing:-0.305px;-webkit-text-stroke:0.2px #f2f2f6;">3229</div></div>
<div style="position:absolute;left:113.5px;top:196px;width:129.0px;height:966px;overflow:hidden"><div class="t" style="left:0.82px;top:620.00px;font-family:'Liberation Sans', sans-serif;font-size:21.3px;line-height:21.3px;color:#ffffff;-webkit-text-stroke:0.3px #fff;">0-7:10, 8:…</div></div>
<div style="position:absolute;left:243.5px;top:196px;width:873.0px;height:966px;overflow:hidden"><div class="t" style="left:35.42px;top:620.00px;font-family:'Liberation Sans', sans-serif;font-size:21.3px;line-height:21.3px;color:#141414;-webkit-text-stroke:0.35px #141414;">INDIAN RIVER LAGOON-SHORELINE NORTHEAST OF THE JENSEN BEACH CAU…</div></div>
<div style="position:absolute;left:28px;top:196px;width:1454.5px;height:966px;overflow:hidden"><div class="t" style="left:1094.23px;top:619.00px;font-family:'Liberation Sans', sans-serif;font-size:21.2px;line-height:21.2px;color:#ffffff;-webkit-text-stroke:0.3px #fff;">USA</div></div>
<div style="position:absolute;left:28px;top:196px;width:1454.5px;height:966px;overflow:hidden"><div class="t" style="left:1258.23px;top:619.00px;font-family:'Liberation Sans', sans-serif;font-size:21.2px;line-height:21.2px;color:#ffffff;-webkit-text-stroke:0.3px #fff;">FL</div></div>
<div style="position:absolute;left:1446px;top:196px;width:36.5px;height:966px;overflow:hidden"><div class="t" style="left:3.23px;top:619.00px;font-family:'Liberation Sans', sans-serif;font-size:21.2px;line-height:21.2px;color:#ffffff;-webkit-text-stroke:0.3px #fff;">SAI</div></div>
<div style="position:absolute;left:28px;top:196px;width:1454.5px;height:966px;overflow:hidden"><div class="t" style="left:20.24px;top:656.00px;font-family:'Liberation Sans', sans-serif;font-size:21px;line-height:21px;color:#f2f2f6;letter-spacing:-0.305px;-webkit-text-stroke:0.2px #f2f2f6;">3230</div></div>
<div style="position:absolute;left:113.5px;top:196px;width:129.0px;height:966px;overflow:hidden"><div class="t" style="left:0.82px;top:657.00px;font-family:'Liberation Sans', sans-serif;font-size:21.3px;line-height:21.3px;color:#ffffff;-webkit-text-stroke:0.3px #fff;">5-8:30 AM</div></div>
<div style="position:absolute;left:243.5px;top:196px;width:873.0px;height:966px;overflow:hidden"><div class="t" style="left:35.42px;top:657.00px;font-family:'Liberation Sans', sans-serif;font-size:21.3px;line-height:21.3px;color:#141414;-webkit-text-stroke:0.35px #141414;">INDIAN RIVER LAGOON-RIVER WATCH LAGOON</div></div>
<div style="position:absolute;left:28px;top:196px;width:1454.5px;height:966px;overflow:hidden"><div class="t" style="left:1094.23px;top:656.00px;font-family:'Liberation Sans', sans-serif;font-size:21.2px;line-height:21.2px;color:#ffffff;-webkit-text-stroke:0.3px #fff;">USA</div></div>
<div style="position:absolute;left:28px;top:196px;width:1454.5px;height:966px;overflow:hidden"><div class="t" style="left:1258.23px;top:656.00px;font-family:'Liberation Sans', sans-serif;font-size:21.2px;line-height:21.2px;color:#ffffff;-webkit-text-stroke:0.3px #fff;">FL</div></div>
<div style="position:absolute;left:1446px;top:196px;width:36.5px;height:966px;overflow:hidden"><div class="t" style="left:3.23px;top:656.00px;font-family:'Liberation Sans', sans-serif;font-size:21.2px;line-height:21.2px;color:#ffffff;-webkit-text-stroke:0.3px #fff;">SAI</div></div>
<div style="position:absolute;left:28px;top:196px;width:1454.5px;height:966px;overflow:hidden"><div class="t" style="left:20.24px;top:694.00px;font-family:'Liberation Sans', sans-serif;font-size:21px;line-height:21px;color:#f2f2f6;letter-spacing:-0.305px;-webkit-text-stroke:0.2px #f2f2f6;">3231</div></div>
<div style="position:absolute;left:113.5px;top:196px;width:129.0px;height:966px;overflow:hidden"><div class="t" style="left:0.82px;top:695.00px;font-family:'Liberation Sans', sans-serif;font-size:21.3px;line-height:21.3px;color:#ffffff;-webkit-text-stroke:0.3px #fff;">0-5:20 PM</div></div>
<div style="position:absolute;left:243.5px;top:196px;width:873.0px;height:966px;overflow:hidden"><div class="t" style="left:35.42px;top:695.00px;font-family:'Liberation Sans', sans-serif;font-size:21.3px;line-height:21.3px;color:#141414;-webkit-text-stroke:0.35px #141414;">INDIAN RIVER LAGOON-STUART CAUSEWAY NORTH SIDE OF THE WEST SPOIL…</div></div>
<div style="position:absolute;left:28px;top:196px;width:1454.5px;height:966px;overflow:hidden"><div class="t" style="left:1094.23px;top:694.00px;font-family:'Liberation Sans', sans-serif;font-size:21.2px;line-height:21.2px;color:#ffffff;-webkit-text-stroke:0.3px #fff;">USA</div></div>
<div style="position:absolute;left:28px;top:196px;width:1454.5px;height:966px;overflow:hidden"><div class="t" style="left:1258.23px;top:694.00px;font-family:'Liberation Sans', sans-serif;font-size:21.2px;line-height:21.2px;color:#ffffff;-webkit-text-stroke:0.3px #fff;">FL</div></div>
<div style="position:absolute;left:1446px;top:196px;width:36.5px;height:966px;overflow:hidden"><div class="t" style="left:3.23px;top:694.00px;font-family:'Liberation Sans', sans-serif;font-size:21.2px;line-height:21.2px;color:#ffffff;-webkit-text-stroke:0.3px #fff;">SAI</div></div>
<div style="position:absolute;left:28px;top:196px;width:1454.5px;height:966px;overflow:hidden"><div class="t" style="left:20.24px;top:731.00px;font-family:'Liberation Sans', sans-serif;font-size:21px;line-height:21px;color:#f2f2f6;letter-spacing:-0.305px;-webkit-text-stroke:0.2px #f2f2f6;">3232</div></div>
<div style="position:absolute;left:113.5px;top:196px;width:129.0px;height:966px;overflow:hidden"><div class="t" style="left:0.82px;top:733.00px;font-family:'Liberation Sans', sans-serif;font-size:21.3px;line-height:21.3px;color:#ffffff;-webkit-text-stroke:0.3px #fff;">5-8:50 AM</div></div>
<div style="position:absolute;left:243.5px;top:196px;width:873.0px;height:966px;overflow:hidden"><div class="t" style="left:35.42px;top:733.00px;font-family:'Liberation Sans', sans-serif;font-size:21.3px;line-height:21.3px;color:#141414;-webkit-text-stroke:0.35px #141414;">INDIAN RIVER LAGOON-STUART CAUSEWAY WEST RELIEF BRIDGE AND NORT…</div></div>
<div style="position:absolute;left:28px;top:196px;width:1454.5px;height:966px;overflow:hidden"><div class="t" style="left:1094.23px;top:732.00px;font-family:'Liberation Sans', sans-serif;font-size:21.2px;line-height:21.2px;color:#ffffff;-webkit-text-stroke:0.3px #fff;">USA</div></div>
<div style="position:absolute;left:28px;top:196px;width:1454.5px;height:966px;overflow:hidden"><div class="t" style="left:1258.23px;top:732.00px;font-family:'Liberation Sans', sans-serif;font-size:21.2px;line-height:21.2px;color:#ffffff;-webkit-text-stroke:0.3px #fff;">FL</div></div>
<div style="position:absolute;left:1446px;top:196px;width:36.5px;height:966px;overflow:hidden"><div class="t" style="left:3.23px;top:732.00px;font-family:'Liberation Sans', sans-serif;font-size:21.2px;line-height:21.2px;color:#ffffff;-webkit-text-stroke:0.3px #fff;">SAI</div></div>
<div style="position:absolute;left:28px;top:196px;width:1454.5px;height:966px;overflow:hidden"><div class="t" style="left:20.24px;top:769.00px;font-family:'Liberation Sans', sans-serif;font-size:21px;line-height:21px;color:#f2f2f6;letter-spacing:-0.305px;-webkit-text-stroke:0.2px #f2f2f6;">3233</div></div>
<div style="position:absolute;left:113.5px;top:196px;width:129.0px;height:966px;overflow:hidden"><div class="t" style="left:0.82px;top:770.00px;font-family:'Liberation Sans', sans-serif;font-size:21.3px;line-height:21.3px;color:#ffffff;-webkit-text-stroke:0.3px #fff;">5-8:10 AM</div></div>
<div style="position:absolute;left:243.5px;top:196px;width:873.0px;height:966px;overflow:hidden"><div class="t" style="left:35.42px;top:770.00px;font-family:'Liberation Sans', sans-serif;font-size:21.3px;line-height:21.3px;color:#141414;-webkit-text-stroke:0.35px #141414;">INDIAN RIVER LAGOON-HOUSE OF REFUGE NORTH TO NEGRO COVE</div></div>
<div style="position:absolute;left:28px;top:196px;width:1454.5px;height:966px;overflow:hidden"><div class="t" style="left:1094.23px;top:769.00px;font-family:'Liberation Sans', sans-serif;font-size:21.2px;line-height:21.2px;color:#ffffff;-webkit-text-stroke:0.3px #fff;">USA</div></div>
<div style="position:absolute;left:28px;top:196px;width:1454.5px;height:966px;overflow:hidden"><div class="t" style="left:1258.23px;top:769.00px;font-family:'Liberation Sans', sans-serif;font-size:21.2px;line-height:21.2px;color:#ffffff;-webkit-text-stroke:0.3px #fff;">FL</div></div>
<div style="position:absolute;left:1446px;top:196px;width:36.5px;height:966px;overflow:hidden"><div class="t" style="left:3.23px;top:769.00px;font-family:'Liberation Sans', sans-serif;font-size:21.2px;line-height:21.2px;color:#ffffff;-webkit-text-stroke:0.3px #fff;">SAI</div></div>
<div style="position:absolute;left:28px;top:196px;width:1454.5px;height:966px;overflow:hidden"><div class="t" style="left:20.24px;top:807.00px;font-family:'Liberation Sans', sans-serif;font-size:21px;line-height:21px;color:#f2f2f6;letter-spacing:-0.305px;-webkit-text-stroke:0.2px #f2f2f6;">3234</div></div>
<div style="position:absolute;left:113.5px;top:196px;width:129.0px;height:966px;overflow:hidden"><div class="t" style="left:0.82px;top:808.00px;font-family:'Liberation Sans', sans-serif;font-size:21.3px;line-height:21.3px;color:#ffffff;-webkit-text-stroke:0.3px #fff;">40-1:00 PM</div></div>
<div style="position:absolute;left:243.5px;top:196px;width:873.0px;height:966px;overflow:hidden"><div class="t" style="left:35.42px;top:808.00px;font-family:'Liberation Sans', sans-serif;font-size:21.3px;line-height:21.3px;color:#141414;-webkit-text-stroke:0.35px #141414;">INDIAN RIVER LAGOON-SHORELINE NORTHEAST OF THE JENSEN BEACH CAU…</div></div>
<div style="position:absolute;left:28px;top:196px;width:1454.5px;height:966px;overflow:hidden"><div class="t" style="left:1094.23px;top:807.00px;font-family:'Liberation Sans', sans-serif;font-size:21.2px;line-height:21.2px;color:#ffffff;-webkit-text-stroke:0.3px #fff;">USA</div></div>
<div style="position:absolute;left:28px;top:196px;width:1454.5px;height:966px;overflow:hidden"><div class="t" style="left:1258.23px;top:807.00px;font-family:'Liberation Sans', sans-serif;font-size:21.2px;line-height:21.2px;color:#ffffff;-webkit-text-stroke:0.3px #fff;">FL</div></div>
<div style="position:absolute;left:1446px;top:196px;width:36.5px;height:966px;overflow:hidden"><div class="t" style="left:3.23px;top:807.00px;font-family:'Liberation Sans', sans-serif;font-size:21.2px;line-height:21.2px;color:#ffffff;-webkit-text-stroke:0.3px #fff;">SAI</div></div>
<div style="position:absolute;left:28px;top:196px;width:1454.5px;height:966px;overflow:hidden"><div class="t" style="left:20.24px;top:844.00px;font-family:'Liberation Sans', sans-serif;font-size:21px;line-height:21px;color:#f2f2f6;letter-spacing:-0.305px;-webkit-text-stroke:0.2px #f2f2f6;">3235</div></div>
<div style="position:absolute;left:113.5px;top:196px;width:129.0px;height:966px;overflow:hidden"><div class="t" style="left:0.82px;top:846.00px;font-family:'Liberation Sans', sans-serif;font-size:21.3px;line-height:21.3px;color:#ffffff;-webkit-text-stroke:0.3px #fff;">5-2:15 PM</div></div>
<div style="position:absolute;left:243.5px;top:196px;width:873.0px;height:966px;overflow:hidden"><div class="t" style="left:35.42px;top:846.00px;font-family:'Liberation Sans', sans-serif;font-size:21.3px;line-height:21.3px;color:#141414;-webkit-text-stroke:0.35px #141414;">INDIAN RIVER LAGOON-RIVER WATCH LAGOON</div></div>
<div style="position:absolute;left:28px;top:196px;width:1454.5px;height:966px;overflow:hidden"><div class="t" style="left:1094.23px;top:845.00px;font-family:'Liberation Sans', sans-serif;font-size:21.2px;line-height:21.2px;color:#ffffff;-webkit-text-stroke:0.3px #fff;">USA</div></div>
<div style="position:absolute;left:28px;top:196px;width:1454.5px;height:966px;overflow:hidden"><div class="t" style="left:1258.23px;top:845.00px;font-family:'Liberation Sans', sans-serif;font-size:21.2px;line-height:21.2px;color:#ffffff;-webkit-text-stroke:0.3px #fff;">FL</div></div>
<div style="position:absolute;left:1446px;top:196px;width:36.5px;height:966px;overflow:hidden"><div class="t" style="left:3.23px;top:845.00px;font-family:'Liberation Sans', sans-serif;font-size:21.2px;line-height:21.2px;color:#ffffff;-webkit-text-stroke:0.3px #fff;">SAI</div></div>
<div style="position:absolute;left:28px;top:196px;width:1454.5px;height:966px;overflow:hidden"><div class="t" style="left:20.24px;top:882.00px;font-family:'Liberation Sans', sans-serif;font-size:21px;line-height:21px;color:#f2f2f6;letter-spacing:-0.305px;-webkit-text-stroke:0.2px #f2f2f6;">3236</div></div>
<div style="position:absolute;left:113.5px;top:196px;width:129.0px;height:966px;overflow:hidden"><div class="t" style="left:0.82px;top:883.00px;font-family:'Liberation Sans', sans-serif;font-size:21.3px;line-height:21.3px;color:#ffffff;-webkit-text-stroke:0.3px #fff;">25-12:35, …</div></div>
<div style="position:absolute;left:243.5px;top:196px;width:873.0px;height:966px;overflow:hidden"><div class="t" style="left:35.42px;top:883.00px;font-family:'Liberation Sans', sans-serif;font-size:21.3px;line-height:21.3px;color:#141414;-webkit-text-stroke:0.35px #141414;">INDIAN RIVER LAGOON-SHORELINE NORTHEAST OF THE JENSEN BEACH CAU…</div></div>
<div style="position:absolute;left:28px;top:196px;width:1454.5px;height:966px;overflow:hidden"><div class="t" style="left:1094.23px;top:882.00px;font-family:'Liberation Sans', sans-serif;font-size:21.2px;line-height:21.2px;color:#ffffff;-webkit-text-stroke:0.3px #fff;">USA</div></div>
<div style="position:absolute;left:28px;top:196px;width:1454.5px;height:966px;overflow:hidden"><div class="t" style="left:1258.23px;top:882.00px;font-family:'Liberation Sans', sans-serif;font-size:21.2px;line-height:21.2px;color:#ffffff;-webkit-text-stroke:0.3px #fff;">FL</div></div>
<div style="position:absolute;left:1446px;top:196px;width:36.5px;height:966px;overflow:hidden"><div class="t" style="left:3.23px;top:882.00px;font-family:'Liberation Sans', sans-serif;font-size:21.2px;line-height:21.2px;color:#ffffff;-webkit-text-stroke:0.3px #fff;">SAI</div></div>
<div style="position:absolute;left:28px;top:196px;width:1454.5px;height:966px;overflow:hidden"><div class="t" style="left:20.24px;top:920.00px;font-family:'Liberation Sans', sans-serif;font-size:21px;line-height:21px;color:#f2f2f6;letter-spacing:-0.305px;-webkit-text-stroke:0.2px #f2f2f6;">3237</div></div>
<div style="position:absolute;left:113.5px;top:196px;width:129.0px;height:966px;overflow:hidden"><div class="t" style="left:0.82px;top:921.00px;font-family:'Liberation Sans', sans-serif;font-size:21.3px;line-height:21.3px;color:#ffffff;-webkit-text-stroke:0.3px #fff;">40-2:15 PM</div></div>
<div style="position:absolute;left:243.5px;top:196px;width:873.0px;height:966px;overflow:hidden"><div class="t" style="left:35.42px;top:921.00px;font-family:'Liberation Sans', sans-serif;font-size:21.3px;line-height:21.3px;color:#141414;-webkit-text-stroke:0.35px #141414;">INDIAN RIVER LAGOON-RIVER WATCH LAGOON</div></div>
<div style="position:absolute;left:28px;top:196px;width:1454.5px;height:966px;overflow:hidden"><div class="t" style="left:1094.23px;top:920.00px;font-family:'Liberation Sans', sans-serif;font-size:21.2px;line-height:21.2px;color:#ffffff;-webkit-text-stroke:0.3px #fff;">USA</div></div>
<div style="position:absolute;left:28px;top:196px;width:1454.5px;height:966px;overflow:hidden"><div class="t" style="left:1258.23px;top:920.00px;font-family:'Liberation Sans', sans-serif;font-size:21.2px;line-height:21.2px;color:#ffffff;-webkit-text-stroke:0.3px #fff;">FL</div></div>
<div style="position:absolute;left:1446px;top:196px;width:36.5px;height:966px;overflow:hidden"><div class="t" style="left:3.23px;top:920.00px;font-family:'Liberation Sans', sans-serif;font-size:21.2px;line-height:21.2px;color:#ffffff;-webkit-text-stroke:0.3px #fff;">SAI</div></div>
<div style="position:absolute;left:28px;top:196px;width:1454.5px;height:966px;overflow:hidden"><div class="t" style="left:20.24px;top:957.00px;font-family:'Liberation Sans', sans-serif;font-size:21px;line-height:21px;color:#f2f2f6;letter-spacing:-0.305px;-webkit-text-stroke:0.2px #f2f2f6;">3238</div></div>
<div style="position:absolute;left:113.5px;top:196px;width:129.0px;height:966px;overflow:hidden"><div class="t" style="left:0.82px;top:958.00px;font-family:'Liberation Sans', sans-serif;font-size:21.3px;line-height:21.3px;color:#ffffff;-webkit-text-stroke:0.3px #fff;">5-4:20 PM</div></div>
<div style="position:absolute;left:243.5px;top:196px;width:873.0px;height:966px;overflow:hidden"><div class="t" style="left:35.42px;top:958.00px;font-family:'Liberation Sans', sans-serif;font-size:21.3px;line-height:21.3px;color:#141414;-webkit-text-stroke:0.35px #141414;">INDIAN RIVER LAGOON-RIVER WATCH LAGOON</div></div>
<div style="position:absolute;left:28px;top:196px;width:1454.5px;height:966px;overflow:hidden"><div class="t" style="left:1094.23px;top:957.00px;font-family:'Liberation Sans', sans-serif;font-size:21.2px;line-height:21.2px;color:#ffffff;-webkit-text-stroke:0.3px #fff;">USA</div></div>
<div style="position:absolute;left:28px;top:196px;width:1454.5px;height:966px;overflow:hidden"><div class="t" style="left:1258.23px;top:957.00px;font-family:'Liberation Sans', sans-serif;font-size:21.2px;line-height:21.2px;color:#ffffff;-webkit-text-stroke:0.3px #fff;">FL</div></div>
<div style="position:absolute;left:1446px;top:196px;width:36.5px;height:966px;overflow:hidden"><div class="t" style="left:3.23px;top:957.00px;font-family:'Liberation Sans', sans-serif;font-size:21.2px;line-height:21.2px;color:#ffffff;-webkit-text-stroke:0.3px #fff;">SAI</div></div>
<svg style="position:absolute;left:0;top:196px" width="1483" height="966" viewBox="0 0 1483 966"><g fill="none" stroke="#b3a1a3" stroke-width="2.3" stroke-linecap="round" stroke-linejoin="round"><g transform="translate(262,24.10) rotate(-45)"><path d="M1.5 -4 H-8 A4 4 0 0 0 -8 4 H-3"/><path d="M-1.5 4 H8 A4 4 0 0 0 8 -4 H3"/><path d="M-5.5 0 H5.5" stroke-width="1.6"/></g><g transform="translate(262,61.74) rotate(-45)"><path d="M1.5 -4 H-8 A4 4 0 0 0 -8 4 H-3"/><path d="M-1.5 4 H8 A4 4 0 0 0 8 -4 H3"/><path d="M-5.5 0 H5.5" stroke-width="1.6"/></g><g transform="translate(262,99.38) rotate(-45)"><path d="M1.5 -4 H-8 A4 4 0 0 0 -8 4 H-3"/><path d="M-1.5 4 H8 A4 4 0 0 0 8 -4 H3"/><path d="M-5.5 0 H5.5" stroke-width="1.6"/></g><g transform="translate(262,137.01) rotate(-45)"><path d="M1.5 -4 H-8 A4 4 0 0 0 -8 4 H-3"/><path d="M-1.5 4 H8 A4 4 0 0 0 8 -4 H3"/><path d="M-5.5 0 H5.5" stroke-width="1.6"/></g><g transform="translate(262,174.65) rotate(-45)"><path d="M1.5 -4 H-8 A4 4 0 0 0 -8 4 H-3"/><path d="M-1.5 4 H8 A4 4 0 0 0 8 -4 H3"/><path d="M-5.5 0 H5.5" stroke-width="1.6"/></g><g transform="translate(262,212.29) rotate(-45)"><path d="M1.5 -4 H-8 A4 4 0 0 0 -8 4 H-3"/><path d="M-1.5 4 H8 A4 4 0 0 0 8 -4 H3"/><path d="M-5.5 0 H5.5" stroke-width="1.6"/></g><g transform="translate(262,249.93) rotate(-45)"><path d="M1.5 -4 H-8 A4 4 0 0 0 -8 4 H-3"/><path d="M-1.5 4 H8 A4 4 0 0 0 8 -4 H3"/><path d="M-5.5 0 H5.5" stroke-width="1.6"/></g><g transform="translate(262,287.57) rotate(-45)"><path d="M1.5 -4 H-8 A4 4 0 0 0 -8 4 H-3"/><path d="M-1.5 4 H8 A4 4 0 0 0 8 -4 H3"/><path d="M-5.5 0 H5.5" stroke-width="1.6"/></g><g transform="translate(262,325.20) rotate(-45)"><path d="M1.5 -4 H-8 A4 4 0 0 0 -8 4 H-3"/><path d="M-1.5 4 H8 A4 4 0 0 0 8 -4 H3"/><path d="M-5.5 0 H5.5" stroke-width="1.6"/></g><g transform="translate(262,362.84) rotate(-45)"><path d="M1.5 -4 H-8 A4 4 0 0 0 -8 4 H-3"/><path d="M-1.5 4 H8 A4 4 0 0 0 8 -4 H3"/><path d="M-5.5 0 H5.5" stroke-width="1.6"/></g><g transform="translate(262,400.48) rotate(-45)"><path d="M1.5 -4 H-8 A4 4 0 0 0 -8 4 H-3"/><path d="M-1.5 4 H8 A4 4 0 0 0 8 -4 H3"/><path d="M-5.5 0 H5.5" stroke-width="1.6"/></g><g transform="translate(262,438.12) rotate(-45)"><path d="M1.5 -4 H-8 A4 4 0 0 0 -8 4 H-3"/><path d="M-1.5 4 H8 A4 4 0 0 0 8 -4 H3"/><path d="M-5.5 0 H5.5" stroke-width="1.6"/></g><g transform="translate(262,475.76) rotate(-45)"><path d="M1.5 -4 H-8 A4 4 0 0 0 -8 4 H-3"/><path d="M-1.5 4 H8 A4 4 0 0 0 8 -4 H3"/><path d="M-5.5 0 H5.5" stroke-width="1.6"/></g><g transform="translate(262,513.39) rotate(-45)"><path d="M1.5 -4 H-8 A4 4 0 0 0 -8 4 H-3"/><path d="M-1.5 4 H8 A4 4 0 0 0 8 -4 H3"/><path d="M-5.5 0 H5.5" stroke-width="1.6"/></g><g transform="translate(262,551.03) rotate(-45)"><path d="M1.5 -4 H-8 A4 4 0 0 0 -8 4 H-3"/><path d="M-1.5 4 H8 A4 4 0 0 0 8 -4 H3"/><path d="M-5.5 0 H5.5" stroke-width="1.6"/></g><g transform="translate(262,588.67) rotate(-45)"><path d="M1.5 -4 H-8 A4 4 0 0 0 -8 4 H-3"/><path d="M-1.5 4 H8 A4 4 0 0 0 8 -4 H3"/><path d="M-5.5 0 H5.5" stroke-width="1.6"/></g><g transform="translate(262,626.31) rotate(-45)"><path d="M1.5 -4 H-8 A4 4 0 0 0 -8 4 H-3"/><path d="M-1.5 4 H8 A4 4 0 0 0 8 -4 H3"/><path d="M-5.5 0 H5.5" stroke-width="1.6"/></g><g transform="translate(262,663.95) rotate(-45)"><path d="M1.5 -4 H-8 A4 4 0 0 0 -8 4 H-3"/><path d="M-1.5 4 H8 A4 4 0 0 0 8 -4 H3"/><path d="M-5.5 0 H5.5" stroke-width="1.6"/></g><g transform="translate(262,701.58) rotate(-45)"><path d="M1.5 -4 H-8 A4 4 0 0 0 -8 4 H-3"/><path d="M-1.5 4 H8 A4 4 0 0 0 8 -4 H3"/><path d="M-5.5 0 H5.5" stroke-width="1.6"/></g><g transform="translate(262,739.22) rotate(-45)"><path d="M1.5 -4 H-8 A4 4 0 0 0 -8 4 H-3"/><path d="M-1.5 4 H8 A4 4 0 0 0 8 -4 H3"/><path d="M-5.5 0 H5.5" stroke-width="1.6"/></g><g transform="translate(262,776.86) rotate(-45)"><path d="M1.5 -4 H-8 A4 4 0 0 0 -8 4 H-3"/><path d="M-1.5 4 H8 A4 4 0 0 0 8 -4 H3"/><path d="M-5.5 0 H5.5" stroke-width="1.6"/></g><g transform="translate(262,814.50) rotate(-45)"><path d="M1.5 -4 H-8 A4 4 0 0 0 -8 4 H-3"/><path d="M-1.5 4 H8 A4 4 0 0 0 8 -4 H3"/><path d="M-5.5 0 H5.5" stroke-width="1.6"/></g><g transform="translate(262,852.14) rotate(-45)"><path d="M1.5 -4 H-8 A4 4 0 0 0 -8 4 H-3"/><path d="M-1.5 4 H8 A4 4 0 0 0 8 -4 H3"/><path d="M-5.5 0 H5.5" stroke-width="1.6"/></g><g transform="translate(262,889.77) rotate(-45)"><path d="M1.5 -4 H-8 A4 4 0 0 0 -8 4 H-3"/><path d="M-1.5 4 H8 A4 4 0 0 0 8 -4 H3"/><path d="M-5.5 0 H5.5" stroke-width="1.6"/></g><g transform="translate(262,927.41) rotate(-45)"><path d="M1.5 -4 H-8 A4 4 0 0 0 -8 4 H-3"/><path d="M-1.5 4 H8 A4 4 0 0 0 8 -4 H3"/><path d="M-5.5 0 H5.5" stroke-width="1.6"/></g><g transform="translate(262,965.05) rotate(-45)"><path d="M1.5 -4 H-8 A4 4 0 0 0 -8 4 H-3"/><path d="M-1.5 4 H8 A4 4 0 0 0 8 -4 H3"/><path d="M-5.5 0 H5.5" stroke-width="1.6"/></g></g></svg>
<div style="position:absolute;left:1571px;top:81px;width:311px;height:44px;border:2px solid #72727d;border-radius:4px;background:#30303c"></div>
<svg style="position:absolute;left:1582px;top:94px" width="24" height="24" viewBox="0 0 24 24"><g fill="none" stroke="#f0f0f4" stroke-width="2" stroke-linecap="round" stroke-linejoin="round"><path d="M10 13a5 5 0 0 0 7.54.54l3-3a5 5 0 0 0-7.07-7.07l-1.72 1.71"/><path d="M14 11a5 5 0 0 0-7.54-.54l-3 3a5 5 0 0 0 7.07 7.07l1.71-1.71"/></g></svg>
<div class="t" style="left:1618.74px;top:96.00px;font-family:'Liberation Sans', sans-serif;font-size:21px;line-height:21px;color:#f4f4f8;letter-spacing:-0.321px;">Reference</div>
<svg style="position:absolute;left:1851.5px;top:102.0px" width="17" height="11"><path d="M2 2 L8.5 9 L15 2" fill="none" stroke="#f0f0f4" stroke-width="2" stroke-linecap="round" stroke-linejoin="round"/></svg>
<div class="t" style="left:1570.06px;top:161.00px;font-family:'Liberation Sans', sans-serif;font-size:15.6px;line-height:15.6px;color:#f0f0f4;letter-spacing:-0.264px;">DATA FROM TABLE</div>
<div style="position:absolute;left:1571px;top:198px;width:311px;height:44px;border:2px solid #72727d;border-radius:4px;background:#30303c"></div>
<svg style="position:absolute;left:1582px;top:211px" width="24" height="24"><g fill="none" stroke="#f0f0f4" stroke-width="2"><rect x="3" y="3" width="18" height="18" rx="1"/><path d="M12 3V21M3 12H21"/></g></svg>
<div class="t" style="left:1618.74px;top:213.00px;font-family:'Liberation Sans', sans-serif;font-size:21px;line-height:21px;color:#f4f4f8;letter-spacing:-0.310px;">Z_Locations</div>
<svg style="position:absolute;left:1851.5px;top:219.0px" width="17" height="11"><path d="M2 2 L8.5 9 L15 2" fill="none" stroke="#f0f0f4" stroke-width="2" stroke-linecap="round" stroke-linejoin="round"/></svg>
<div class="t" style="left:1570.06px;top:278.00px;font-family:'Liberation Sans', sans-serif;font-size:15.6px;line-height:15.6px;color:#f0f0f4;letter-spacing:-0.038px;">SHOW COLUMN</div>
<div style="position:absolute;left:1571px;top:316px;width:311px;height:44px;border:2px solid #72727d;border-radius:4px;background:#30303c"></div>
<svg style="position:absolute;left:1582px;top:328px" width="24" height="24"><g fill="none" stroke="#f0f0f4" stroke-width="2"><rect x="3" y="3" width="18" height="18" rx="1"/><path d="M15 3V21M3 9H15M3 15H15"/></g></svg>
<div class="t" style="left:1618.74px;top:330.00px;font-family:'Liberation Sans', sans-serif;font-size:21px;line-height:21px;color:#f4f4f8;letter-spacing:-0.787px;">LOCATION</div>
<svg style="position:absolute;left:1851.5px;top:336.5px" width="17" height="11"><path d="M2 2 L8.5 9 L15 2" fill="none" stroke="#f0f0f4" stroke-width="2" stroke-linecap="round" stroke-linejoin="round"/></svg>
<div class="t" style="left:1569.74px;top:396.00px;font-family:'Liberation Sans', sans-serif;font-size:21px;line-height:21px;color:#6fc08e;letter-spacing:0.295px;">Set dropdown condition</div>
<svg style="position:absolute;left:1806px;top:390px" width="30" height="30"><circle cx="15" cy="15" r="12.2" fill="none" stroke="#cfcfd6" stroke-width="1.5"/></svg>
<div class="t" style="left:1814.42px;top:398.00px;font-family:'Liberation Sans', sans-serif;font-size:18px;line-height:18px;color:#cfcfd6;">?</div>
<div class="t" style="left:1570.06px;top:446.00px;font-family:'Liberation Sans', sans-serif;font-size:15.6px;line-height:15.6px;color:#f0f0f4;letter-spacing:-0.593px;">TWO-WAY REFERENCE</div>
<svg style="position:absolute;left:1745px;top:437px" width="30" height="30"><circle cx="15" cy="15" r="12.2" fill="none" stroke="#cfcfd6" stroke-width="1.5"/></svg>
<div class="t" style="left:1753.92px;top:444.00px;font-family:'Liberation Sans', sans-serif;font-size:18px;line-height:18px;color:#cfcfd6;">?</div>
<svg style="position:absolute;left:1854px;top:440px" width="26" height="24"><g fill="none" stroke="#d6d6dc" stroke-width="1.6" stroke-linejoin="round" stroke-linecap="round"><path d="M3.5 5.5H22.5M9.5 5V2.5H16V5M6 6.5L6.8 20.5H19.2L20 6.5"/></g></svg>
<div class="t" style="left:1570.07px;top:494.00px;font-family:'Liberation Sans', sans-serif;font-size:15.5px;line-height:15.5px;color:#a6a6b2;letter-spacing:-0.785px;">TARGET TABLE</div>
<div class="t" style="left:1686.24px;top:489.00px;font-family:'Liberation Sans', sans-serif;font-size:21px;line-height:21px;color:#f4f4f8;letter-spacing:-0.310px;">Z_Locations</div>
<div class="t" style="left:1570.07px;top:528.00px;font-family:'Liberation Sans', sans-serif;font-size:15.5px;line-height:15.5px;color:#a6a6b2;letter-spacing:0.138px;">COLUMN</div>
<div class="t" style="left:1650.80px;top:524.00px;font-family:'Liberation Sans', sans-serif;font-size:20px;line-height:20px;color:#f4f4f8;letter-spacing:-1.015px;">TOTAL_TRIP_DATES...</div>
<div style="position:absolute;left:1544px;top:579px;width:368px;height:1.5px;background:#55555f;"></div>
<div style="position:absolute;left:1912.5px;top:69px;width:7.5px;height:1138px;background:#2a2b29;"></div>
<svg style="position:absolute;left:1912px;top:84px" width="8" height="12"><path d="M7.5 2 L3 8 L7.5 8 Z" fill="#b9b9b9"/></svg>
<div class="t" style="left:1569.56px;top:612.00px;font-family:'Liberation Sans', sans-serif;font-size:15.6px;line-height:15.6px;color:#f0f0f4;letter-spacing:-0.403px;">CELL FORMAT</div>
<div style="position:absolute;left:1571px;top:648px;width:235px;height:38px;border:2px solid #72727d;border-radius:6px;background:#262631;overflow:hidden"><div style="position:absolute;left:0;top:0;width:78.5px;height:38px;background:#65656f"></div><div style="position:absolute;left:157.5px;top:0;width:2px;height:38px;background:#72727d"></div></div>
<div style="position:absolute;left:1824px;top:648px;width:58px;height:38px;border:2px solid #72727d;border-radius:6px;background:#262631"></div>
<svg style="position:absolute;left:1571px;top:648px" width="320" height="44" viewBox="1571 648 320 44"><g stroke="#e8e8ee" stroke-width="1.9" stroke-linecap="round" fill="none">
<path d="M1601 661.5 H1621 M1601 669 H1621 M1601 676.5 H1611"/>
<path d="M1681 661.5 H1700 M1685 669 H1696 M1683 676.5 H1698"/>
<path d="M1760 661.5 H1780 M1764 669 H1780 M1772 676.5 H1780"/>
<path d="M1845 661.5 H1865 M1845 669 H1863 a3.7 3.7 0 0 1 0 7.5 H1857 M1859.5 674 L1857 676.5 L1859.5 679 M1845 676.5 H1850"/>
</g></svg>
<div class="t" style="left:1570.06px;top:723.00px;font-family:'Liberation Sans', sans-serif;font-size:15.6px;line-height:15.6px;color:#f0f0f4;letter-spacing:-0.811px;">HEADER STYLE</div>
<div style="position:absolute;left:1571px;top:759px;width:311px;height:67px;border:2px solid #72727d;border-radius:4px;background:#30303c"></div>
<div style="position:absolute;left:1587px;top:767px;width:30px;height:29.5px;border:1.5px solid #d0d0d8"></div>
<div class="t" style="left:1593.74px;top:774.00px;font-family:'Liberation Sans', sans-serif;font-size:21px;line-height:21px;color:#f0f0f4;">T</div>
<div class="t" style="left:1628.74px;top:774.00px;font-family:'Liberation Sans', sans-serif;font-size:21px;line-height:21px;color:#f4f4f8;letter-spacing:0.111px;">Default header style</div>
<svg style="position:absolute;left:1855.0px;top:777.5px" width="17" height="11"><path d="M2 2 L8.5 9 L15 2" fill="none" stroke="#f0f0f4" stroke-width="2" stroke-linecap="round" stroke-linejoin="round"/></svg>
<div style="position:absolute;left:1220.5px;top:805px;width:692px;height:394.5px;border:3.5px solid #5a8f74;border-bottom-width:6px;background:#eebac3;box-shadow:0 0 3px 1px rgba(70,125,95,0.6)"></div>
<div style="position:absolute;left:1224px;top:808px;width:692px;height:37.5px;background:#2c2c37;"></div>
<svg style="position:absolute;left:1232px;top:817px" width="23" height="23"><rect x="1" y="1" width="20.5" height="20.5" rx="3" fill="#5cb87a"/><path d="M5 9 H17.5 M5 14 H17.5" stroke="#2c2c37" stroke-width="2.2"/></svg>
<div class="t" style="left:1262.80px;top:821.00px;font-family:'Liberation Mono', monospace;font-size:16.4px;line-height:16.4px;color:#ffffff;letter-spacing:0.053px;"><span style="color:#ebe392">&quot;INDIAN RIVER&quot;</span> <span style="color:#d77ad0">in</span> $LOCATION</div>
<svg style="position:absolute;left:1240px;top:857px" width="18" height="20"><path d="M6 3.5 L12 10 L6 16.5" fill="none" stroke="#a79aa0" stroke-width="1.8" stroke-linecap="round" stroke-linejoin="round"/></svg>
<div class="t" style="left:1269.04px;top:858.00px;font-family:'Liberation Sans', sans-serif;font-size:21px;line-height:21px;color:#1c1618;letter-spacing:0.102px;-webkit-text-stroke:0.3px #1c1618;">TypeError : argument of type 'Record' is not iterable</div>
<div class="t" style="left:1269.04px;top:915.00px;font-family:'Liberation Sans', sans-serif;font-size:21px;line-height:21px;color:#1c1618;letter-spacing:-0.118px;-webkit-text-stroke:0.3px #1c1618;">A `TypeError` is usually caused by trying</div>
<div class="t" style="left:1269.04px;top:944.00px;font-family:'Liberation Sans', sans-serif;font-size:21px;line-height:21px;color:#1c1618;letter-spacing:0.276px;-webkit-text-stroke:0.3px #1c1618;">to combine two incompatible types of objects,</div>
<div class="t" style="left:1269.04px;top:972.00px;font-family:'Liberation Sans', sans-serif;font-size:21px;line-height:21px;color:#1c1618;letter-spacing:0.302px;-webkit-text-stroke:0.3px #1c1618;">by calling a function with the wrong type of object,</div>
<div class="t" style="left:1269.04px;top:1000.00px;font-family:'Liberation Sans', sans-serif;font-size:21px;line-height:21px;color:#1c1618;letter-spacing:0.343px;-webkit-text-stroke:0.3px #1c1618;">or by trying to do an operation not allowed on a given type of</div>
<div class="t" style="left:1269.04px;top:1029.00px;font-family:'Liberation Sans', sans-serif;font-size:21px;line-height:21px;color:#1c1618;letter-spacing:0.304px;-webkit-text-stroke:0.3px #1c1618;">object.</div>
<div class="t" style="left:1269.04px;top:1086.00px;font-family:'Liberation Sans', sans-serif;font-size:21px;line-height:21px;color:#1c1618;letter-spacing:0.124px;-webkit-text-stroke:0.3px #1c1618;">An iterable is an object capable of returning its members one at a</div>
<div class="t" style="left:1269.04px;top:1116.00px;font-family:'Liberation Sans', sans-serif;font-size:21px;line-height:21px;color:#1c1618;letter-spacing:0.297px;-webkit-text-stroke:0.3px #1c1618;">time.</div>
<div class="t" style="left:1269.04px;top:1144.00px;font-family:'Liberation Sans', sans-serif;font-size:21px;line-height:21px;color:#1c1618;letter-spacing:-0.065px;-webkit-text-stroke:0.3px #1c1618;">Python containers (`list, tuple, dict`, etc.) are iterables.</div>
<div class="t" style="left:1269.04px;top:1172.00px;font-family:'Liberation Sans', sans-serif;font-size:21px;line-height:21px;color:#1c1618;letter-spacing:0.128px;-webkit-text-stroke:0.3px #1c1618;">'rec' is not a container. A container is required here.</div>
</body></html>
